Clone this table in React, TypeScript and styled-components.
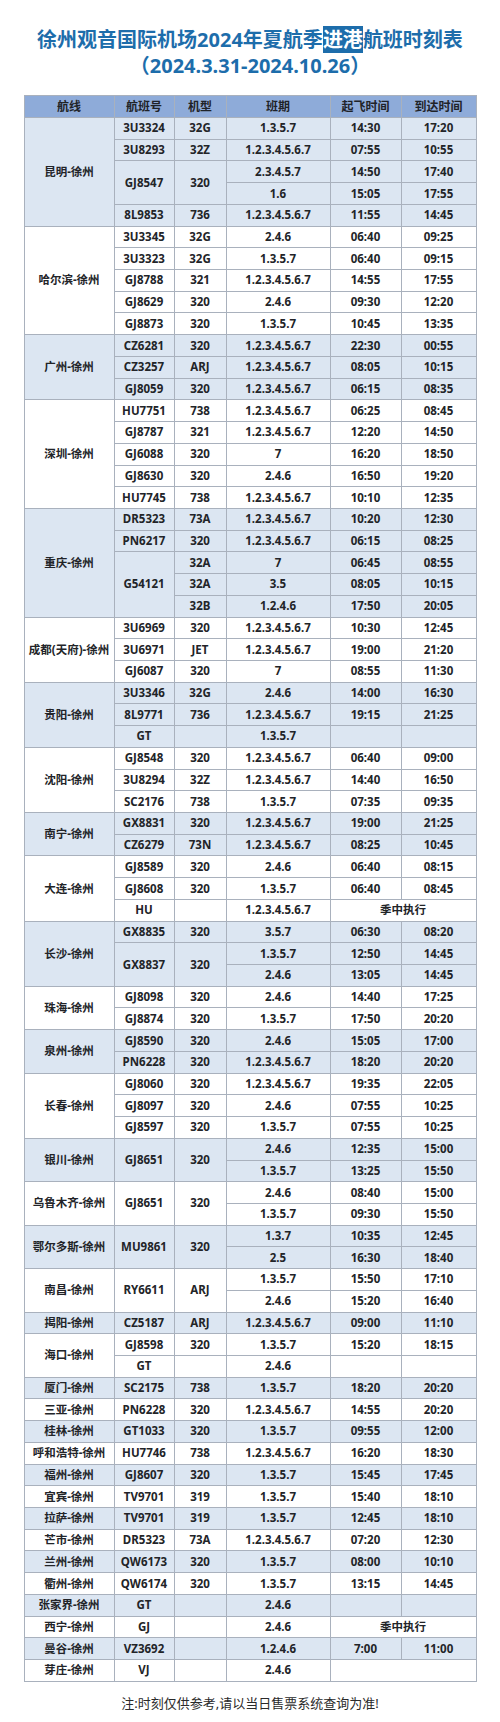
import React from "react";
import styled, { createGlobalStyle } from "styled-components";

const GlobalStyle = createGlobalStyle`
  html, body { margin: 0; padding: 0; background: #ffffff; }
  body { font-family: "Noto Sans", "Noto Sans CJK SC", sans-serif; }
`;

type CellSpec = string | { t: string; rs?: number; cs?: number } | null;
type Group = { route: string; rows: CellSpec[][] };

const R = (t: string, rs: number) => ({ t, rs });
const C2 = (t: string) => ({ t, cs: 2 });
const A = "1.2.3.4.5.6.7";

const groups: Group[] = [
  {
    route: "昆明-徐州",
    rows: [
      ["3U3324", "32G", "1.3.5.7", "14:30", "17:20"],
      ["3U8293", "32Z", A, "07:55", "10:55"],
      [R("GJ8547", 2), R("320", 2), "2.3.4.5.7", "14:50", "17:40"],
      [null, null, "1.6", "15:05", "17:55"],
      ["8L9853", "736", A, "11:55", "14:45"],
    ],
  },
  {
    route: "哈尔滨-徐州",
    rows: [
      ["3U3345", "32G", "2.4.6", "06:40", "09:25"],
      ["3U3323", "32G", "1.3.5.7", "06:40", "09:15"],
      ["GJ8788", "321", A, "14:55", "17:55"],
      ["GJ8629", "320", "2.4.6", "09:30", "12:20"],
      ["GJ8873", "320", "1.3.5.7", "10:45", "13:35"],
    ],
  },
  {
    route: "广州-徐州",
    rows: [
      ["CZ6281", "320", A, "22:30", "00:55"],
      ["CZ3257", "ARJ", A, "08:05", "10:15"],
      ["GJ8059", "320", A, "06:15", "08:35"],
    ],
  },
  {
    route: "深圳-徐州",
    rows: [
      ["HU7751", "738", A, "06:25", "08:45"],
      ["GJ8787", "321", A, "12:20", "14:50"],
      ["GJ6088", "320", "7", "16:20", "18:50"],
      ["GJ8630", "320", "2.4.6", "16:50", "19:20"],
      ["HU7745", "738", A, "10:10", "12:35"],
    ],
  },
  {
    route: "重庆-徐州",
    rows: [
      ["DR5323", "73A", A, "10:20", "12:30"],
      ["PN6217", "320", A, "06:15", "08:25"],
      [R("G54121", 3), "32A", "7", "06:45", "08:55"],
      [null, "32A", "3.5", "08:05", "10:15"],
      [null, "32B", "1.2.4.6", "17:50", "20:05"],
    ],
  },
  {
    route: "成都(天府)-徐州",
    rows: [
      ["3U6969", "320", A, "10:30", "12:45"],
      ["3U6971", "JET", A, "19:00", "21:20"],
      ["GJ6087", "320", "7", "08:55", "11:30"],
    ],
  },
  {
    route: "贵阳-徐州",
    rows: [
      ["3U3346", "32G", "2.4.6", "14:00", "16:30"],
      ["8L9771", "736", A, "19:15", "21:25"],
      ["GT", "", "1.3.5.7", "", ""],
    ],
  },
  {
    route: "沈阳-徐州",
    rows: [
      ["GJ8548", "320", A, "06:40", "09:00"],
      ["3U8294", "32Z", A, "14:40", "16:50"],
      ["SC2176", "738", "1.3.5.7", "07:35", "09:35"],
    ],
  },
  {
    route: "南宁-徐州",
    rows: [
      ["GX8831", "320", A, "19:00", "21:25"],
      ["CZ6279", "73N", A, "08:25", "10:45"],
    ],
  },
  {
    route: "大连-徐州",
    rows: [
      ["GJ8589", "320", "2.4.6", "06:40", "08:15"],
      ["GJ8608", "320", "1.3.5.7", "06:40", "08:45"],
      ["HU", "", A, C2("季中执行")],
    ],
  },
  {
    route: "长沙-徐州",
    rows: [
      ["GX8835", "320", "3.5.7", "06:30", "08:20"],
      [R("GX8837", 2), R("320", 2), "1.3.5.7", "12:50", "14:45"],
      [null, null, "2.4.6", "13:05", "14:45"],
    ],
  },
  {
    route: "珠海-徐州",
    rows: [
      ["GJ8098", "320", "2.4.6", "14:40", "17:25"],
      ["GJ8874", "320", "1.3.5.7", "17:50", "20:20"],
    ],
  },
  {
    route: "泉州-徐州",
    rows: [
      ["GJ8590", "320", "2.4.6", "15:05", "17:00"],
      ["PN6228", "320", A, "18:20", "20:20"],
    ],
  },
  {
    route: "长春-徐州",
    rows: [
      ["GJ8060", "320", A, "19:35", "22:05"],
      ["GJ8097", "320", "2.4.6", "07:55", "10:25"],
      ["GJ8597", "320", "1.3.5.7", "07:55", "10:25"],
    ],
  },
  {
    route: "银川-徐州",
    rows: [
      [R("GJ8651", 2), R("320", 2), "2.4.6", "12:35", "15:00"],
      [null, null, "1.3.5.7", "13:25", "15:50"],
    ],
  },
  {
    route: "乌鲁木齐-徐州",
    rows: [
      [R("GJ8651", 2), R("320", 2), "2.4.6", "08:40", "15:00"],
      [null, null, "1.3.5.7", "09:30", "15:50"],
    ],
  },
  {
    route: "鄂尔多斯-徐州",
    rows: [
      [R("MU9861", 2), R("320", 2), "1.3.7", "10:35", "12:45"],
      [null, null, "2.5", "16:30", "18:40"],
    ],
  },
  {
    route: "南昌-徐州",
    rows: [
      [R("RY6611", 2), R("ARJ", 2), "1.3.5.7", "15:50", "17:10"],
      [null, null, "2.4.6", "15:20", "16:40"],
    ],
  },
  { route: "揭阳-徐州", rows: [["CZ5187", "ARJ", A, "09:00", "11:10"]] },
  {
    route: "海口-徐州",
    rows: [
      ["GJ8598", "320", "1.3.5.7", "15:20", "18:15"],
      ["GT", "", "2.4.6", "", ""],
    ],
  },
  { route: "厦门-徐州", rows: [["SC2175", "738", "1.3.5.7", "18:20", "20:20"]] },
  { route: "三亚-徐州", rows: [["PN6228", "320", A, "14:55", "20:20"]] },
  { route: "桂林-徐州", rows: [["GT1033", "320", "1.3.5.7", "09:55", "12:00"]] },
  { route: "呼和浩特-徐州", rows: [["HU7746", "738", A, "16:20", "18:30"]] },
  { route: "福州-徐州", rows: [["GJ8607", "320", "1.3.5.7", "15:45", "17:45"]] },
  { route: "宜宾-徐州", rows: [["TV9701", "319", "1.3.5.7", "15:40", "18:10"]] },
  { route: "拉萨-徐州", rows: [["TV9701", "319", "1.3.5.7", "12:45", "18:10"]] },
  { route: "芒市-徐州", rows: [["DR5323", "73A", A, "07:20", "12:30"]] },
  { route: "兰州-徐州", rows: [["QW6173", "320", "1.3.5.7", "08:00", "10:10"]] },
  { route: "衢州-徐州", rows: [["QW6174", "320", "1.3.5.7", "13:15", "14:45"]] },
  { route: "张家界-徐州", rows: [["GT", "", "2.4.6", "", ""]] },
  { route: "西宁-徐州", rows: [["GJ", "", "2.4.6", C2("季中执行")]] },
  { route: "曼谷-徐州", rows: [["VZ3692", "", "1.2.4.6", "7:00", "11:00"]] },
  { route: "芽庄-徐州", rows: [["VJ", "", "2.4.6", C2("")]] },
];

const headers = ["航线", "航班号", "机型", "班期", "起飞时间", "到达时间"];
const colWidths = [90, 60, 52, 104, 71, 75];

const Page = styled.div`
  width: 500px;
  margin: 0 auto;
  background: #ffffff;
  padding-top: 27px;
  padding-bottom: 10px;
`;

const Title = styled.h1`
  margin: 0 0 16px;
  text-align: center;
  color: #1d6dab;
  font-family: "Noto Sans", "Noto Sans CJK SC", sans-serif;
  font-weight: 700;
  font-size: 20px;
  line-height: 26px;
  letter-spacing: 0;
`;

const TitleLine = styled.span`
  display: block;
`;

const Highlight = styled.span`
  background: #1d6dab;
  color: #ffffff;
`;

const ScheduleTable = styled.table`
  width: 452px;
  margin: 0 auto;
  border-collapse: collapse;
  table-layout: fixed;
  border: 1px solid #a9b1bd;
`;

const HeadRow = styled.tr`
  height: 22px;
`;

const BodyRow = styled.tr`
  height: 21.73px;
`;

const HeadCell = styled.th`
  background: #8eabd9;
  color: #1f2328;
  font-family: "Noto Sans", "Noto Sans CJK SC", sans-serif;
  font-weight: 700;
  font-size: 12px;
  line-height: 14px;
  padding: 0;
  text-align: center;
  vertical-align: middle;
  border: 1px solid #a9b1bd;
`;

const Cell = styled.td<{ $shaded: boolean }>`
  background: ${(p) => (p.$shaded ? "#dce6f2" : "#ffffff")};
  color: #222428;
  font-family: "Noto Sans", "Noto Sans CJK SC", sans-serif;
  font-weight: 700;
  font-size: 11.5px;
  line-height: 14px;
  padding: 0;
  text-align: center;
  vertical-align: middle;
  white-space: nowrap;
  border: 1px solid #a9b1bd;
`;

const Note = styled.p`
  margin: 11px 0 0;
  text-align: center;
  color: #2a2a2a;
  font-family: "Noto Sans", "Noto Sans CJK SC", sans-serif;
  font-weight: 400;
  font-size: 13px;
  line-height: 20px;
`;

export default function App() {
  return (
    <>
      <GlobalStyle />
      <Page>
        <Title>
          <TitleLine>
            徐州观音国际机场2024年夏航季<Highlight>进港</Highlight>航班时刻表
          </TitleLine>
          <TitleLine>（2024.3.31-2024.10.26）</TitleLine>
        </Title>
        <ScheduleTable>
          <colgroup>
            {colWidths.map((w, i) => (
              <col key={i} style={{ width: w }} />
            ))}
          </colgroup>
          <thead>
            <HeadRow>
              {headers.map((h) => (
                <HeadCell key={h}>{h}</HeadCell>
              ))}
            </HeadRow>
          </thead>
          <tbody>
            {groups.map((g, gi) => {
              const shaded = gi % 2 === 0;
              return g.rows.map((row, ri) => (
                <BodyRow key={`${gi}-${ri}`}>
                  {ri === 0 && (
                    <Cell $shaded={shaded} rowSpan={g.rows.length}>
                      {g.route}
                    </Cell>
                  )}
                  {row.map((c, ci) => {
                    if (c === null) return null;
                    if (typeof c === "string") {
                      return (
                        <Cell key={ci} $shaded={shaded}>
                          {c}
                        </Cell>
                      );
                    }
                    return (
                      <Cell
                        key={ci}
                        $shaded={shaded}
                        rowSpan={c.rs}
                        colSpan={c.cs}
                      >
                        {c.t}
                      </Cell>
                    );
                  })}
                </BodyRow>
              ));
            })}
          </tbody>
        </ScheduleTable>
        <Note>注:时刻仅供参考,请以当日售票系统查询为准!</Note>
      </Page>
    </>
  );
}
